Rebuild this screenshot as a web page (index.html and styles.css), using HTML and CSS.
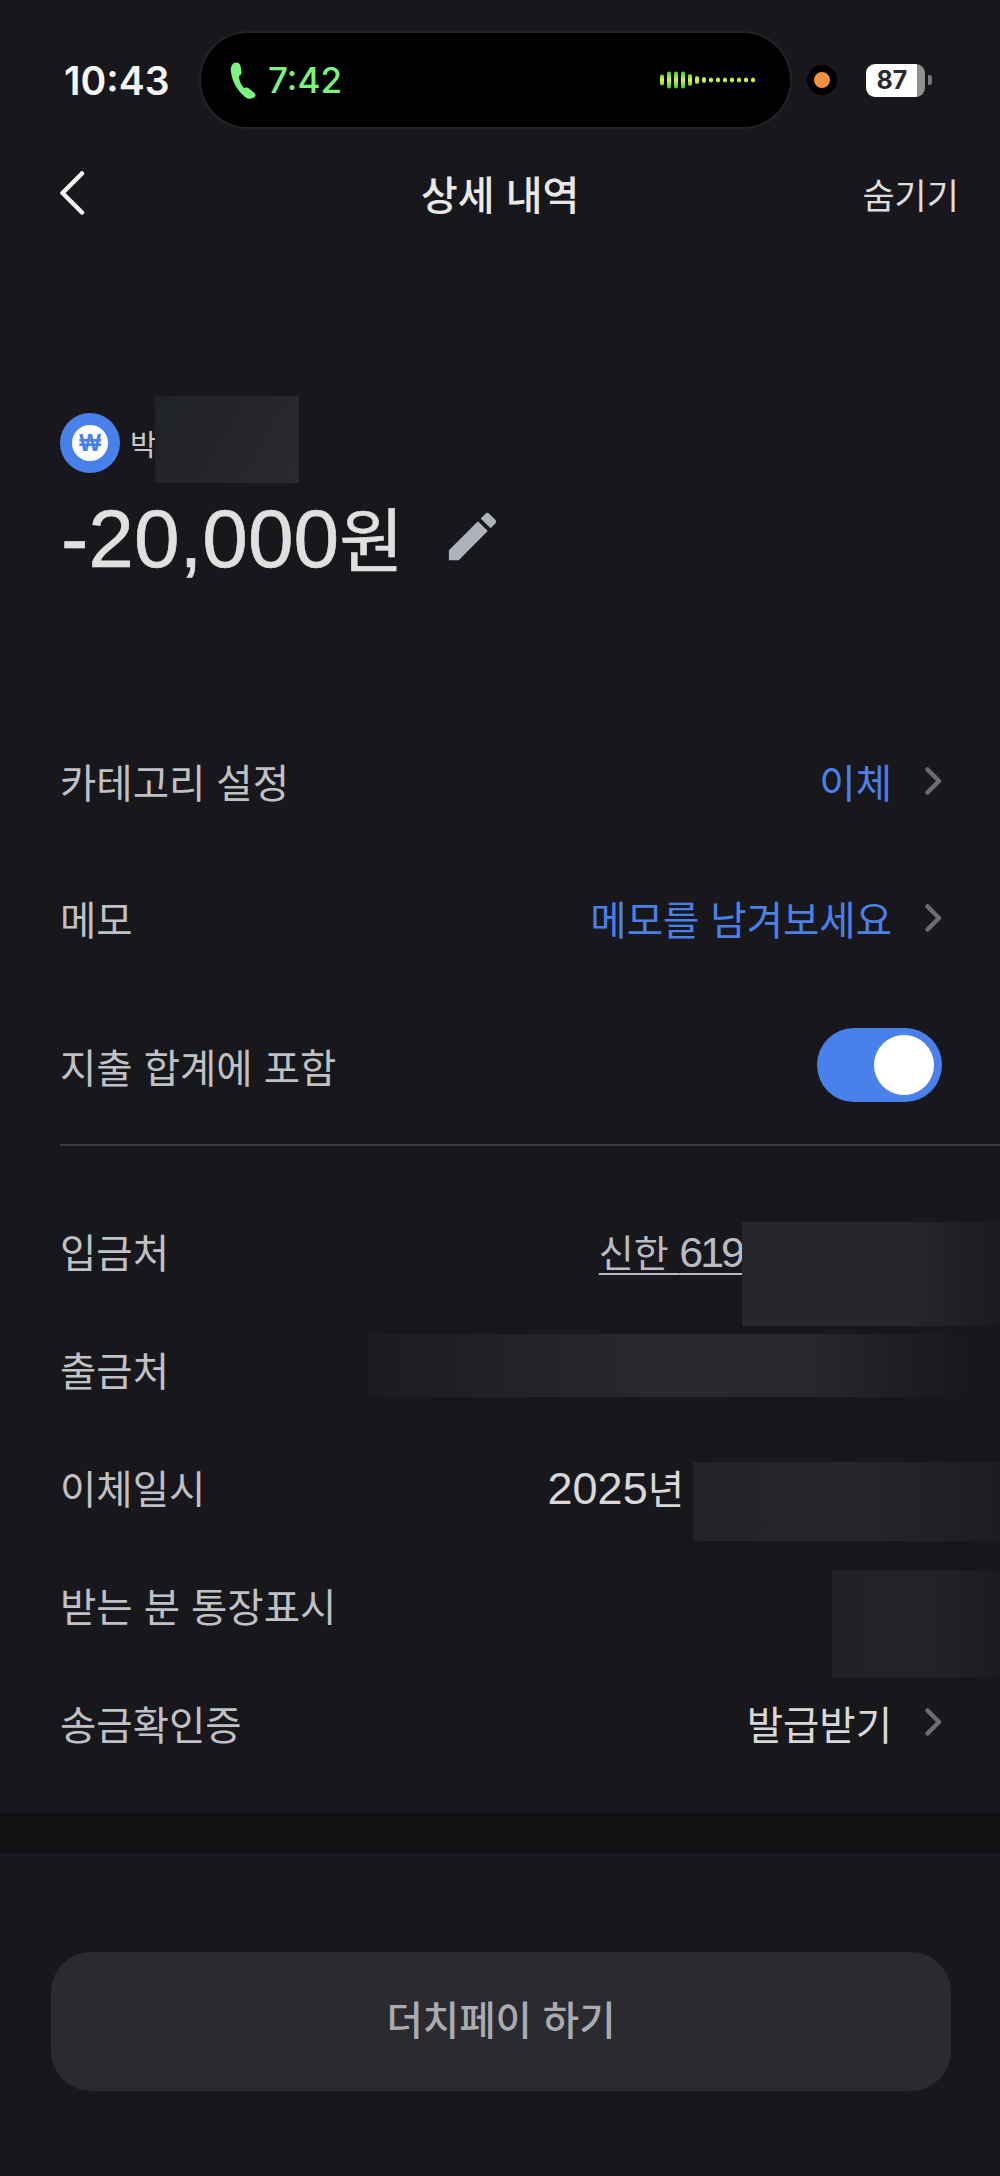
FILE: index.html
```html
<!DOCTYPE html>
<html lang="ko">

<head>
    <meta charset="UTF-8">
    <meta name="viewport" content="width=device-width, initial-scale=1.0">
    <title>상세 내역</title>
    <link rel="stylesheet" href="styles.css">
</head>

<body>
    <div class="page">
        <!-- 상태바 -->
        <div class="status">
            <span class="time">10:43</span>
            <div class="island">
                <svg class="phone" viewBox="0 0 26 37" width="26" height="37">
                    <path fill="#7cf27f" d="M4 1C7-.5 10 1 10.5 4l1 6c.3 2-1 3.5-2.5 4 0 4 2 9 5 12 1.5-.5 3.500-1 5 .5l5.500 4.500c1.500 1.500 1.300 3.500-.5 4.500-3 2-6.500 1.500-9-.5C8 29 2 20 .8 9 .4 6 1.500 2.500 4 1z" />
                </svg>
                <span class="call-time">7:42</span>
                <svg class="wave" viewBox="0 0 98 18" width="98" height="18">
                    <defs>
                        <linearGradient id="waveColor" gradientUnits="userSpaceOnUse" x1="0" y1="0" x2="0" y2="18">
                            <stop offset="0.2" stop-color="#5fd83a" />
                            <stop offset="0.5" stop-color="#e6f52e" />
                            <stop offset="0.8" stop-color="#5fd83a" />
                        </linearGradient>
                    </defs>
                    <g fill="url(#waveColor)">
                        <rect x="1" y="3.500" width="4" height="11" rx="2" />
                        <rect x="8" y="0.500" width="4" height="17" rx="2" />
                        <rect x="15" y="0.500" width="4" height="17" rx="2" />
                        <rect x="22" y="0.500" width="4" height="17" rx="2" />
                        <rect x="29" y="3" width="4" height="12" rx="2" />
                        <rect x="36" y="5" width="4" height="8" rx="2" />
                        <rect x="43" y="6" width="4" height="6" rx="2" />
                        <rect x="50" y="6.500" width="4" height="5" rx="2" />
                        <rect x="57" y="6.500" width="4" height="5" rx="2" />
                        <rect x="64" y="6.500" width="4" height="5" rx="2" />
                        <rect x="71" y="6.500" width="4" height="5" rx="2" />
                        <rect x="78" y="6.500" width="4" height="5" rx="2" />
                        <rect x="85" y="6.500" width="4" height="5" rx="2" />
                        <rect x="92" y="6.500" width="4" height="5" rx="2" />
                    </g>
                </svg>
            </div>
            <span class="mic-dot"></span>
            <div class="battery">87</div>
            <span class="battery-nub"></span>
        </div>

        <!-- 네비게이션 -->
        <div class="nav">
            <svg class="back" viewBox="0 0 26 44" width="26" height="44">
                <path d="M23 2.500 3.500 22 23 41.500" fill="none" stroke="#f2f2f2" stroke-width="4.500" stroke-linecap="round" stroke-linejoin="round" />
            </svg>
            <span class="nav-title">상세 내역</span>
            <span class="nav-hide">숨기기</span>
        </div>

        <!-- 금액 -->
        <div class="hero">
            <div class="payee">
                <div class="logo"><span class="logo-inner">₩</span></div>
                <span class="payee-name">박</span>
                <span class="redact redact-name"></span>
            </div>
            <div class="amount">
                <span class="amount-text">-20,000<span class="amount-unit">원</span></span>
                <svg class="pencil" viewBox="0 0 24 24" width="63" height="63">
                    <path fill="#aeb2ba" d="M3 17.250V21h3.750L17.810 9.940l-3.750-3.750L3 17.250zM20.710 7.040a1 1 0 0 0 0-1.410l-2.340-2.340a1 1 0 0 0-1.410 0l-1.830 1.830 3.750 3.750 1.830-1.830z" />
                </svg>
            </div>
        </div>

        <!-- 설정 -->
        <div class="settings">
            <div class="row row-tall">
                <span class="label">카테고리 설정</span>
                <span class="value value-blue">이체</span>
                <svg class="chevron" viewBox="0 0 17 28" width="17" height="28"><path d="M2.500 2.500 14 14 2.500 25.500" /></svg>
            </div>
            <div class="row row-tall">
                <span class="label">메모</span>
                <span class="value value-blue">메모를 남겨보세요</span>
                <svg class="chevron" viewBox="0 0 17 28" width="17" height="28"><path d="M2.500 2.500 14 14 2.500 25.500" /></svg>
            </div>
            <div class="row row-toggle">
                <span class="label">지출 합계에 포함</span>
                <div class="toggle"><span class="knob"></span></div>
            </div>
        </div>

        <!-- 상세 -->
        <div class="details">
            <div class="row">
                <span class="label">입금처</span>
                <span class="value value-link value-account">신한 <span class="num num-account">619</span></span>
                <span class="redact redact-account"></span>
            </div>
            <div class="row">
                <span class="label">출금처</span>
                <span class="redact redact-from"></span>
            </div>
            <div class="row">
                <span class="label">이체일시</span>
                <span class="value value-date"><span class="num">2025</span>년</span>
                <span class="redact redact-date"></span>
            </div>
            <div class="row">
                <span class="label">받는 분 통장표시</span>
                <span class="redact redact-memo"></span>
            </div>
            <div class="row">
                <span class="label">송금확인증</span>
                <span class="value">발급받기</span>
                <svg class="chevron" viewBox="0 0 17 28" width="17" height="28"><path d="M2.500 2.500 14 14 2.500 25.500" /></svg>
            </div>
        </div>

        <div class="band"></div>

        <div class="footer">
            <div class="dutch-btn">더치페이 하기</div>
        </div>
    </div>
</body>

</html>
```

FILE: styles.css
```css
* {
    margin: 0;
    padding: 0;
    box-sizing: border-box;
}

body {
    background: #18181c;
    font-family: "Liberation Sans", "Noto Sans CJK KR", sans-serif;
    color: #c0c1c5;
}

.page {
    display: flex;
    flex-direction: column;
    width: 1000px;
    height: 2176px;
    overflow: hidden;
}

/* 상태바 */
.status {
    display: flex;
    align-items: center;
    height: 127px;
    padding: 33px 0 0 64px;
}

.time {
    width: 137px;
    font-family: Inter, sans-serif;
    font-size: 39px;
    font-weight: 600;
    color: #f5f5f5;
}

.island {
    display: flex;
    align-items: center;
    width: 589px;
    height: 94px;
    padding: 0 33px 0 29px;
    background: #000;
    border-radius: 47px;
    box-shadow: 0 0 0 2px #222227;
}

.phone {
    flex-shrink: 0;
}

.call-time {
    flex: 1;
    margin-left: 12px;
    font-family: Inter, sans-serif;
    font-size: 35px;
    font-weight: 500;
    color: #7cf27f;
}

.mic-dot {
    width: 30px;
    height: 30px;
    margin-left: 17px;
    background: #f0913e;
    border: 7px solid #000;
    border-radius: 50%;
}

.battery {
    width: 59px;
    height: 33px;
    margin-left: 29px;
    padding-right: 7px;
    background: linear-gradient(to right, #fff 86%, #8f8f8f 86%);
    border-radius: 9px;
    font-family: Inter, sans-serif;
    font-size: 25px;
    font-weight: 700;
    line-height: 33px;
    text-align: center;
    color: #2a2a2e;
}

.battery-nub {
    width: 4px;
    height: 10px;
    margin-left: 3px;
    background: #77777b;
    border-radius: 0 3px 3px 0;
}

/* 네비게이션 */
.nav {
    display: flex;
    align-items: center;
    justify-content: space-between;
    height: 132px;
    padding: 0 41px 0 59px;
}

.nav-title {
    margin-left: 53px;
    font-size: 40px;
    font-weight: 500;
    color: #e8e8e8;
}

.nav-hide {
    font-size: 35px;
    color: #dcdcde;
}

/* 금액 */
.hero {
    height: 453px;
    padding: 154px 0 0 60px;
}

.payee {
    position: relative;
    display: flex;
    align-items: center;
    height: 60px;
}

.logo {
    display: flex;
    align-items: center;
    justify-content: center;
    width: 60px;
    height: 60px;
    background: #4a80ea;
    border-radius: 50%;
}

.logo-inner {
    width: 36px;
    height: 36px;
    background: #fff;
    border-radius: 50%;
    font-size: 23px;
    font-weight: 700;
    line-height: 36px;
    text-align: center;
    color: #4a80ea;
}

.payee-name {
    margin-left: 10px;
    font-size: 29px;
    color: #c8c8c8;
}

.amount {
    display: flex;
    align-items: center;
    height: 90px;
    margin-top: 18px;
    margin-left: 1px;
}

.amount-text {
    font-size: 82px;
    color: #e0e0e0;
    -webkit-text-stroke: 0.6px #e0e0e0;
}

.amount-unit {
    font-size: 70px;
}

.pencil {
    margin-left: 37px;
}

/* 행 */
.row {
    position: relative;
    display: flex;
    align-items: center;
    height: 118px;
    padding: 0 60px;
}

.row-tall {
    height: 137px;
}

.row-toggle {
    height: 158px;
}

.label {
    flex: 1;
    font-size: 39.5px;
}

.value {
    font-size: 39.5px;
    color: #d8d8da;
    margin-right: 33px;
}

.value-blue {
    color: #4a80e8;
}

.value-link {
    text-decoration: underline;
    text-decoration-thickness: 2px;
    text-underline-offset: 6px;
    color: #b9bcc5;
}

.value-account {
    margin-right: 198px;
    font-size: 38px;
}

.value-date {
    margin-right: 256px;
}

.num {
    font-size: 45px;
}

.num-account {
    font-size: 43px;
    letter-spacing: -3px;
}

.chevron {
    fill: none;
    stroke: #6c6c71;
    stroke-width: 4.500;
    stroke-linecap: round;
    stroke-linejoin: round;
    margin-right: -2px;
}

.toggle {
    display: flex;
    align-items: center;
    justify-content: flex-end;
    width: 125px;
    height: 74px;
    margin-right: -2px;
    padding-right: 8px;
    background: #4a80ea;
    border-radius: 37px;
}

.knob {
    width: 60px;
    height: 60px;
    background: #fff;
    border-radius: 50%;
}

.settings {
    border-bottom: 2px solid #3b3b40;
    margin-left: 60px;
}

.settings .row {
    margin-left: -60px;
}

.details {
    height: 667px;
    padding-top: 45px;
}

/* 가림 처리 */
.redact {
    position: absolute;
    right: 0;
}

.redact-name {
    left: 95px;
    right: auto;
    top: -17px;
    width: 144px;
    height: 87px;
    background: linear-gradient(120deg, #1f2228, #24252b 50%, #2a2a2f);
}

.redact-account {
    left: 742px;
    top: 31px;
    height: 104px;
    background: linear-gradient(to right, #26262b 65%, #1a1a1f);
}

.redact-from {
    left: 369px;
    top: 25px;
    height: 63px;
    background: linear-gradient(to right, #1b1b20, #29292d 45%, #28282c 70%, #18181c 95%);
}

.redact-date {
    left: 693px;
    top: 35px;
    height: 79px;
    background: linear-gradient(to right, #222227, #26262b 50%, #1c1c21);
}

.redact-memo {
    left: 832px;
    top: 26px;
    height: 106px;
    background: linear-gradient(to right, #212126, #222227 60%, #1b1b20);
}

/* 하단 */
.band {
    height: 40px;
    background: #111113;
}

.footer {
    padding: 99px 49px 0 51px;
}

.dutch-btn {
    height: 139px;
    background: #2a2a2f;
    border-radius: 40px;
    font-size: 39.5px;
    font-weight: 500;
    line-height: 139px;
    text-align: center;
    color: #a9abb1;
}
```
